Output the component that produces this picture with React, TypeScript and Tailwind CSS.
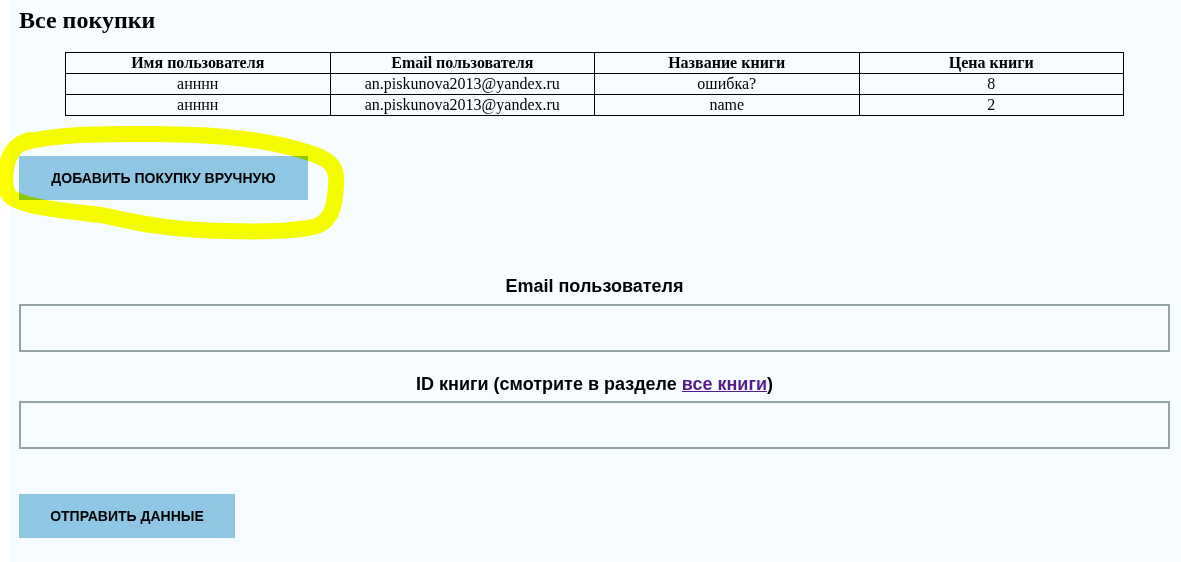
import React from 'react';

const rows = [
  { name: 'анннн', email: 'an.piskunova2013@yandex.ru', book: 'ошибка?', price: '8' },
  { name: 'анннн', email: 'an.piskunova2013@yandex.ru', book: 'name', price: '2' },
];

const serif = { fontFamily: '"Liberation Serif", "Times New Roman", serif' };
const sans = { fontFamily: '"Liberation Sans", Arial, sans-serif' };

// hand-drawn yellow marker loop around the first button
function Highlight() {
  return (
    <svg
      className="absolute left-0 top-0 pointer-events-none mix-blend-multiply"
      width="360"
      height="260"
      viewBox="0 0 360 260"
    >
      <path
        d="M 22 143 C 60 133, 110 134, 150 134 C 200 134, 260 138, 300 150 C 330 158, 338 165, 336 185 C 335 205, 332 220, 317 226 C 290 233, 240 232, 200 230 C 150 228, 120 218, 100 215 C 60 210, 30 208, 12 198 C 2 190, 4 165, 12 152 C 16 146, 20 143, 30 140"
        fill="none"
        stroke="#ffff00"
        strokeWidth="16"
        strokeLinecap="round"
        strokeLinejoin="round"
      />
    </svg>
  );
}

export default function App() {
  return (
    <div className="relative flex bg-white h-[562px] w-[1181px] overflow-hidden">
      <div className="ml-[10px] flex-1 bg-[#f6fcff] flex flex-col text-black">
        <h2 className="mt-[6px] pl-[9px] text-[24px] leading-[28px] font-bold" style={serif}>
          Все покупки
        </h2>

        <table
          className="mt-[18px] ml-[55px] w-[1059px] border-collapse table-fixed text-[16px] leading-[18px]"
          style={serif}
        >
          <thead>
            <tr>
              {['Имя пользователя', 'Email пользователя', 'Название книги', 'Цена книги'].map((h) => (
                <th key={h} className="border border-black py-px px-px font-bold text-center">
                  {h}
                </th>
              ))}
            </tr>
          </thead>
          <tbody>
            {rows.map((r, i) => (
              <tr key={i}>
                <td className="border border-black py-px px-px text-center">{r.name}</td>
                <td className="border border-black py-px px-px text-center">{r.email}</td>
                <td className="border border-black py-px px-px text-center">{r.book}</td>
                <td className="border border-black py-px px-px text-center">{r.price}</td>
              </tr>
            ))}
          </tbody>
        </table>

        <div className="mt-[40px] pl-[9px]" style={sans}>
          <button className="h-[44px] w-[289px] bg-[#8ec6e3] text-[14px] font-bold uppercase text-black">
            Добавить покупку вручную
          </button>
        </div>

        <div className="pl-[9px] w-[1160px] flex flex-col" style={sans}>
          <label className="mt-[76px] text-center text-[18px] leading-[21px] font-bold">
            Email пользователя
          </label>
          <div className="mt-[7px] h-[48px] w-[1151px] border-2 border-[#95a5a6]" />

          <label className="mt-[22px] text-center text-[18px] leading-[21px] font-bold">
            ID книги (смотрите в разделе{' '}
            <a className="text-[#551a8b] underline">все книги</a>)
          </label>
          <div className="mt-[6px] h-[48px] w-[1151px] border-2 border-[#95a5a6]" />

          <button className="mt-[45px] h-[44px] w-[216px] bg-[#8ec6e3] text-[14px] font-bold uppercase text-black">
            Отправить данные
          </button>
        </div>
      </div>
      <Highlight />
    </div>
  );
}
